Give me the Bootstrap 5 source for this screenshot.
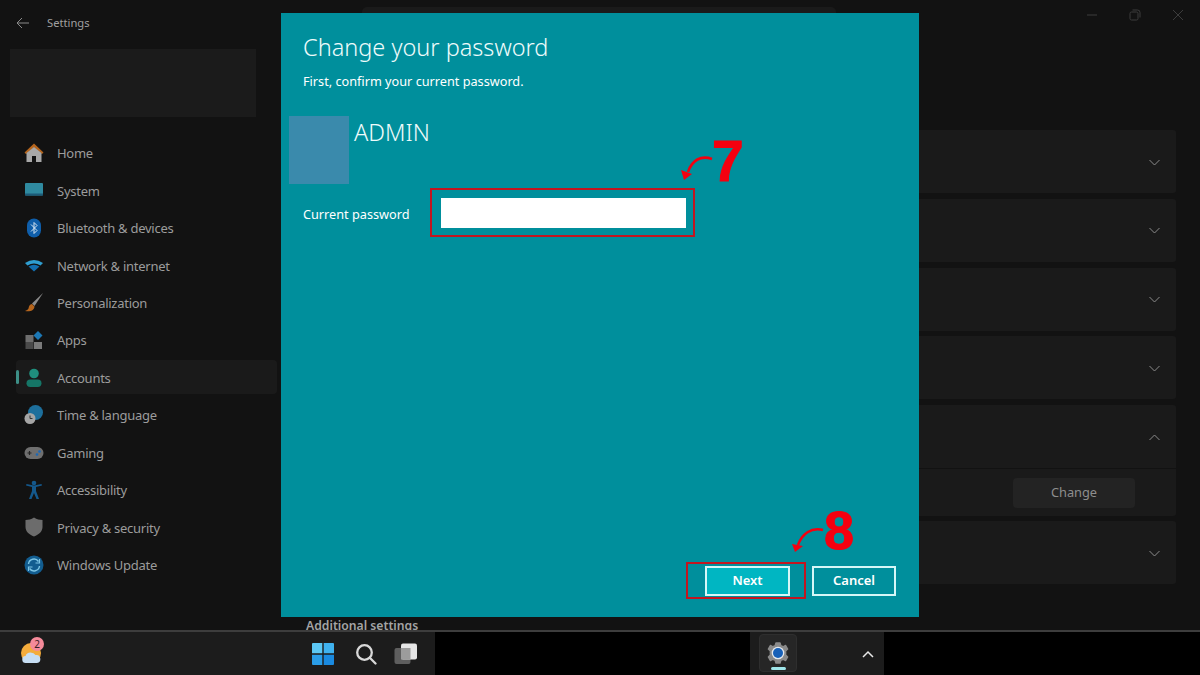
<!DOCTYPE html>
<html lang="en">
<head>
<meta charset="utf-8">
<title>Settings</title>
<link href="https://cdn.jsdelivr.net/npm/bootstrap@5.3.0/dist/css/bootstrap.min.css" rel="stylesheet">
<style>
html,body{margin:0;height:675px;overflow:hidden;background:#121212;font-family:"Noto Sans","Open Sans",sans-serif;color:#9c9c9c}
.stage{position:relative;width:1200px;height:675px;overflow:hidden}
.win{height:630px;overflow:hidden}
.side{width:281px;flex:none}
.titleline{height:46px;padding-left:16px;gap:17px;font-size:11.2px;color:#a0a0a0}
.profile{width:246px;height:68px;margin:3px 0 18px 10px;background:#1b1b1b}
.navrow{height:34px;margin:0 4px 3.45px 16px;padding-left:8px;gap:13px;font-size:13px;letter-spacing:-.26px;border-radius:4px;position:relative}
.navrow svg{width:20px;height:20px;flex:none;margin-top:2px}
.navrow span{margin-top:4px}
.navrow.on{background:#1a1a1a}
.navrow.on::before{content:"";position:absolute;left:0;top:10px;width:3px;height:14px;border-radius:2px;background:#3d8f87}
.main{flex:1;padding:7px 24px 0 16px;min-width:0}
.findbox{width:474px;height:30px;margin:0 0 93px 65px;background:#1a1a1a;border-radius:5px}
.setrow{height:63px;background:#1a1a1a;border:0;border-radius:3px;margin-bottom:5.75px;padding-right:16px}
.setrow.open{margin-bottom:1px;border-radius:3px 3px 0 0}
.setrow svg{margin-top:1px}
.subrow{height:47px;background:#1a1a1a;border-radius:0 0 3px 3px;margin-bottom:5px;padding-right:41px}
.changebtn{width:122px;height:30px;background:#232323;border:0;border-radius:4px;color:#8e8e8e;font-size:12.8px;padding:0}
.addl{font-size:12.2px;font-weight:600;color:#a4a4a4;margin:33px 0 0 9px;line-height:18px}
.ctl{position:absolute;top:8px;right:0;gap:27px;padding-right:14px}
.taskbar{height:45px;background:#1c1c1c;border-top:2px solid #3d3d3d;position:relative}
.tb-a{width:435px;height:43px;padding-left:20px}
.tb-blk{background:#000;height:43px}
.tb-mid{width:315px}
.tb-b{width:134px;height:43px}
.runapp{position:absolute;left:759px;top:634px;width:38px;height:38px;background:#262626;border-radius:4px;border:1px solid #2e2e2e}
.gearpic{position:absolute;left:766px;top:641px}
.runbar{position:absolute;left:771px;top:667px;width:15px;height:3px;border-radius:2px;background:#9fe6ea}
.wx{width:26px;height:28px;flex:none;align-self:flex-start;margin-top:5px}
.pins{margin-left:266px;gap:17px}
.srch{margin-left:4px}
.trayup{margin-right:10px}
.dialog{position:absolute;left:281px;top:13px;width:638px;height:604px;background:#008f9c;color:#fff;padding:18px 23px 18px 22px}
.dlgtitle{font-size:23.5px;font-weight:300;line-height:32px;margin:0;color:#eefbfb}
.dlgsub{font-size:12.7px;line-height:18px;margin:9px 0 0}
.userline{margin:26px 0 0 -14px;gap:5px;height:68px}
.avatar{width:60px;height:68px;background:#3a8aac}
.uname{font-size:23.5px;font-weight:300;line-height:32px;color:#eefbfb}
.pwline{margin-top:4px}
.pwlabel{font-size:12.7px;width:127px;flex:none;white-space:nowrap;margin-top:5px}
.redbox{border:2px solid #c3161f}
.pwbox{padding:8px 7px 7px 9px;width:265px;flex:none}
.pwinput{width:245px;height:30px;border:0;border-radius:0;background:#fff;padding:0}
.nextbox{padding:2px 14px 1px 17px;margin-right:6px}
.dlgbtn{width:85px;height:30px;border:2px solid #d5f7f7;border-radius:0;color:#fff;font-size:13px;font-weight:600;padding:0;background:transparent}
.dlgbtn.go{background:#00b6c2}
.dlgbtn.no{width:84px;margin-top:4px}
.foot{margin-top:auto}
.num{position:absolute;color:#f5000f;font-family:"Liberation Sans",sans-serif;font-weight:700;line-height:1;-webkit-text-stroke:1px #f5000f}
.n7{left:712px;top:133px;font-size:57px}
.n8{left:824px;top:503px;font-size:54px}
.arr{position:absolute;left:0;top:0;width:1200px;height:675px;pointer-events:none}
</style>
</head>
<body>
<div class="stage">
  <div class="win d-flex">
    <div class="side">
      <div class="titleline d-flex align-items-center">
        <svg width="14" height="12" viewBox="0 0 14 12" fill="none" stroke="#8a8a8a" stroke-width="1"><path d="M13 6H1.500M6 1 1 6l5 5"/></svg>
        <span>Settings</span>
      </div>
      <div class="profile"></div>
      <div class="navrow d-flex align-items-center">
        <svg viewBox="0 0 20 20"><path d="M10 .5 .5 9.500l1.500 1.500L10 4.500l8 6.500 1.500-1.500Z" fill="#b5651d"/><path d="M2.500 10 10 4l7.500 6v9h-5.500v-6H8v6H2.500Z" fill="#a8a8a8"/></svg><span>Home</span>
      </div>
      <div class="navrow d-flex align-items-center">
        <svg viewBox="0 0 20 20"><rect x="1" y="3" width="18" height="12.500" rx="1" fill="#2f8aa0"/><rect x="1" y="13.500" width="18" height="2" fill="#1c5a78"/></svg><span>System</span>
      </div>
      <div class="navrow d-flex align-items-center">
        <svg viewBox="0 0 20 20"><rect x="3" y="0.500" width="14" height="19" rx="7" fill="#0f5eaa"/><path d="m7 6.500 6 6-3 3v-11l3 3-6 6" fill="none" stroke="#d8e6f2" stroke-width="1"/></svg><span>Bluetooth &amp; devices</span>
      </div>
      <div class="navrow d-flex align-items-center">
        <svg viewBox="0 0 20 20"><path d="M1 8q9-6 18 0l-2.500 2.500q-6.500-4-13 0Z" fill="#2f9ed0"/><path d="M4.500 11.500q5.500-3.500 11 0L10 16.500Z" fill="#136fb0"/></svg><span>Network &amp; internet</span>
      </div>
      <div class="navrow d-flex align-items-center">
        <svg viewBox="0 0 20 20"><path d="M19 0 8 10.500l2.500 2.500Z" fill="#8c8c8c"/><path d="M8 11c-3 .5-3 3-3.500 4.500-.5 1-2 2-3.500 2.500 4.500 1 9 0 9.500-4.500Z" fill="#b5651d"/></svg><span>Personalization</span>
      </div>
      <div class="navrow d-flex align-items-center">
        <svg viewBox="0 0 20 20"><rect x="1.500" y="5" width="8" height="7" fill="#6e6e6e"/><rect x="1.500" y="12" width="8" height="7" fill="#4a4a4a"/><rect x="10" y="12" width="8" height="7" fill="#7a7a7a"/><path d="m14 1 4.500 4.500L14 10 9.500 5.500Z" fill="#1c78b5"/></svg><span>Apps</span>
      </div>
      <div class="navrow on d-flex align-items-center">
        <svg viewBox="0 0 20 20"><circle cx="10" cy="5.500" r="4.800" fill="#1f8f7d"/><rect x="2.500" y="11.500" width="15" height="7.500" rx="3.700" fill="#157566"/></svg><span>Accounts</span>
      </div>
      <div class="navrow d-flex align-items-center">
        <svg viewBox="0 0 20 20"><circle cx="11.500" cy="7.500" r="7.500" fill="#1d6f9c"/><circle cx="6" cy="13.500" r="5.500" fill="#a5a5a5"/><path d="M6 10.500v3h2.500" stroke="#333" fill="none"/></svg><span>Time &amp; language</span>
      </div>
      <div class="navrow d-flex align-items-center">
        <svg viewBox="0 0 20 20"><rect x="0.500" y="4" width="19" height="12" rx="6" fill="#6f6f6f"/><path d="M3.500 10h4M5.500 8v4" stroke="#262626" stroke-width="1.200"/><circle cx="13" cy="11.500" r="1.300" fill="#1a68b8"/><circle cx="15.500" cy="8.500" r="1.300" fill="#1a68b8"/></svg><span>Gaming</span>
      </div>
      <div class="navrow d-flex align-items-center">
        <svg viewBox="0 0 20 20"><circle cx="10" cy="3" r="2.300" fill="#14588c"/><path d="M2 5.500 8 7v4l-3 8h2.500L10 13l2.500 6H15l-3-8V7l6-1.500-.5-1.500-7.500 1.500L2.500 4Z" fill="#14588c"/></svg><span>Accessibility</span>
      </div>
      <div class="navrow d-flex align-items-center">
        <svg viewBox="0 0 20 20"><path d="M10 .5c3 1.800 5.500 2.500 8.500 2.500v7c0 4.500-3.500 7.500-8.500 9.500-5-2-8.500-5-8.500-9.500V3c3 0 5.500-.7 8.500-2.500Z" fill="#6c6c6c"/></svg><span>Privacy &amp; security</span>
      </div>
      <div class="navrow d-flex align-items-center">
        <svg viewBox="0 0 20 20"><circle cx="10" cy="10" r="9.500" fill="#125d90"/><path d="M4.500 9A5.500 5.500 0 0 1 14.500 6.500M15.500 11A5.500 5.500 0 0 1 5.500 13.500" fill="none" stroke="#7cc4e4" stroke-width="1.400"/><path d="M15.500 4v4h-4M4.500 16v-4h4" fill="none" stroke="#7cc4e4" stroke-width="1.200"/></svg><span>Windows Update</span>
      </div>
    </div>
    <div class="main">
      <div class="findbox"></div>
      <div class="setrow d-flex align-items-center justify-content-end"><svg width="11" height="7" viewBox="0 0 11 7" fill="none" stroke="#8a8a8a"><path d="m.5 1 5 5 5-5"/></svg></div>
      <div class="setrow d-flex align-items-center justify-content-end"><svg width="11" height="7" viewBox="0 0 11 7" fill="none" stroke="#8a8a8a"><path d="m.5 1 5 5 5-5"/></svg></div>
      <div class="setrow d-flex align-items-center justify-content-end"><svg width="11" height="7" viewBox="0 0 11 7" fill="none" stroke="#8a8a8a"><path d="m.5 1 5 5 5-5"/></svg></div>
      <div class="setrow d-flex align-items-center justify-content-end"><svg width="11" height="7" viewBox="0 0 11 7" fill="none" stroke="#8a8a8a"><path d="m.5 1 5 5 5-5"/></svg></div>
      <div class="setrow open d-flex align-items-center justify-content-end"><svg width="11" height="7" viewBox="0 0 11 7" fill="none" stroke="#8a8a8a"><path d="m.5 6 5-5 5 5"/></svg></div>
      <div class="subrow d-flex align-items-center justify-content-end"><button type="button" class="btn changebtn">Change</button></div>
      <div class="setrow d-flex align-items-center justify-content-end"><svg width="11" height="7" viewBox="0 0 11 7" fill="none" stroke="#8a8a8a"><path d="m.5 1 5 5 5-5"/></svg></div>
      <div class="addl">Additional settings</div>
    </div>
  </div>
  <div class="ctl d-flex align-items-center">
    <svg width="16" height="14" viewBox="0 0 16 14" fill="none" stroke="#3c3c3c"><path d="M3 7h10"/></svg>
    <svg width="16" height="14" viewBox="0 0 16 14" fill="none" stroke="#3c3c3c"><rect x="3" y="4" width="8" height="8" rx="1.500"/><path d="M5.500 2h5a2.500 2.500 0 0 1 2.500 2.500v5"/></svg>
    <svg width="16" height="14" viewBox="0 0 16 14" fill="none" stroke="#3c3c3c"><path d="m3 2 10 10M13 2 3 12"/></svg>
  </div>

  <div class="taskbar d-flex">
    <div class="tb-a d-flex align-items-center">
      <svg class="wx" viewBox="0 0 26 28"><circle cx="11" cy="16" r="10" fill="#f4ac3c"/><path d="M6 26a3.500 3.500 0 0 1-.5-7q1-3.500 5-3.500 3.500 0 5 2.500a4 4 0 0 1 1.500 8Z" fill="#c7def4"/><circle cx="17" cy="7" r="7" fill="#f58a9a"/><text x="17" y="10.500" font-size="10" text-anchor="middle" fill="#3a2026" font-family="Noto Sans">2</text></svg>
      <div class="pins d-flex align-items-center">
        <svg width="22" height="22" viewBox="0 0 22 22"><path d="M0 1a1 1 0 0 1 1-1h9.300v10.300H0Z" fill="#5cc8f5"/><path d="M11.700 0H21a1 1 0 0 1 1 1v9.300H11.700Z" fill="#3fb2ef"/><path d="M0 11.700h10.300V22H1a1 1 0 0 1-1-1Z" fill="#2a9de8"/><path d="M11.700 11.700H22V21a1 1 0 0 1-1 1h-9.300Z" fill="#1a8ae0"/></svg>
        <svg class="srch" width="22" height="22" viewBox="0 0 22 22" fill="none" stroke="#d8d8d8" stroke-width="2.300"><circle cx="9.500" cy="9.500" r="7.300"/><path d="m14.800 14.800 5.700 5.700" stroke-linecap="round"/></svg>
        <svg width="24" height="22" viewBox="0 0 24 22"><rect x="0.500" y="5" width="16" height="16" rx="2" fill="#5e5e5e"/><rect x="7" y="0.500" width="16" height="16" rx="2" fill="#e6e6e6"/><rect x="7" y="5" width="9.500" height="11.500" fill="#9c9c9c"/></svg>
      </div>
    </div>
    <div class="tb-blk tb-mid"></div>
    <div class="tb-b d-flex align-items-center justify-content-end">
      <svg class="trayup" width="12" height="8" viewBox="0 0 12 8" fill="none" stroke="#e8e8e8" stroke-width="1.500"><path d="m1 7 5-5 5 5"/></svg>
    </div>
    <div class="tb-blk flex-grow-1"></div>
  </div>
  <div class="runapp"></div>
  <svg class="gearpic" width="24" height="24" viewBox="0 0 24 24"><path d="M10 2h4l.8 2.800 2.300 1 2.500-1.300 2 3.500-2 1.900v4.200l2 1.900-2 3.500-2.500-1.300-2.300 1L14 22h-4l-.8-2.800-2.300-1-2.500 1.300-2-3.500 2-1.900V9.900l-2-1.900 2-3.500 2.500 1.300 2.300-1Z" fill="#8a8a8a" stroke="#8a8a8a" stroke-linejoin="round" stroke-width="1.500"/><circle cx="12" cy="12" r="6.300" fill="#e4e9ee"/><circle cx="12" cy="12" r="5" fill="#1760b8"/></svg>
  <div class="runbar"></div>

  <div class="dialog d-flex flex-column">
    <h1 class="dlgtitle">Change your password</h1>
    <p class="dlgsub">First, confirm your current password.</p>
    <div class="userline d-flex">
      <div class="avatar"></div>
      <div class="uname">ADMIN</div>
    </div>
    <div class="pwline d-flex align-items-center">
      <label class="pwlabel" for="curpw">Current password</label>
      <div class="redbox pwbox"><input id="curpw" type="password" class="form-control pwinput"></div>
    </div>
    <div class="foot d-flex justify-content-end align-items-start">
      <div class="redbox nextbox"><button type="button" class="btn dlgbtn go">Next</button></div>
      <button type="button" class="btn dlgbtn no">Cancel</button>
    </div>
  </div>

  <div class="num n7">7</div>
  <div class="num n8">8</div>
  <svg class="arr" viewBox="0 0 1200 675" fill="none">
    <path d="M712 159C701 155 692 160 688 172" stroke="#f5000f" stroke-width="2.600"/>
    <path d="M681 170 692 174 684 180Z" fill="#f5000f"/>
    <path d="M823 530C811 527 802 534 798 545" stroke="#f5000f" stroke-width="2.600"/>
    <path d="M792 544 803 546 795 552Z" fill="#f5000f"/>
  </svg>
</div>
<script src="https://cdn.jsdelivr.net/npm/bootstrap@5.3.0/dist/js/bootstrap.bundle.min.js"></script>
</body>
</html>
